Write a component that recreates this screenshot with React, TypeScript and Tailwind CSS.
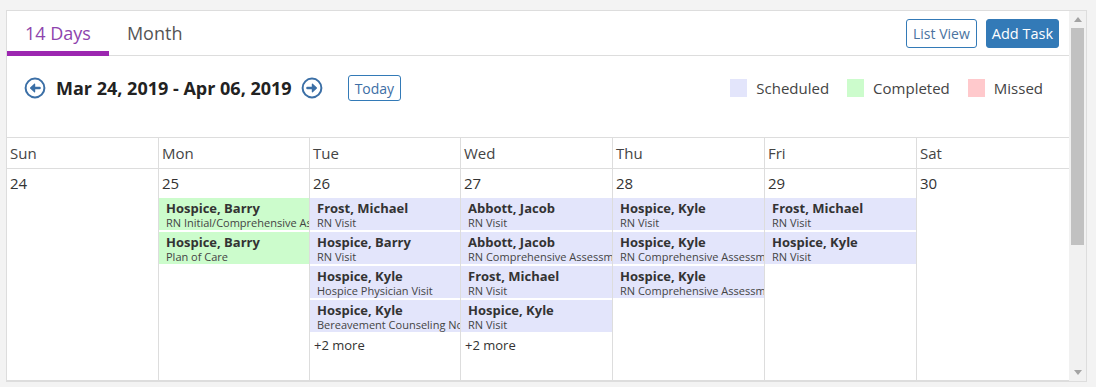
import React from "react";

type Kind = "scheduled" | "completed" | "missed";

type CalEvent = {
  name: string;
  task: string;
  kind: Kind;
};

type Day = {
  label: string;
  num: number;
  events: CalEvent[];
  more?: number;
};

const KIND_BG: Record<Kind, string> = {
  scheduled: "bg-[#e3e5fb]",
  completed: "bg-[#ccfccc]",
  missed: "bg-[#ffc9cc]",
};

const DAYS: Day[] = [
  { label: "Sun", num: 24, events: [] },
  {
    label: "Mon",
    num: 25,
    events: [
      { name: "Hospice, Barry", task: "RN Initial/Comprehensive Assessment", kind: "completed" },
      { name: "Hospice, Barry", task: "Plan of Care", kind: "completed" },
    ],
  },
  {
    label: "Tue",
    num: 26,
    events: [
      { name: "Frost, Michael", task: "RN Visit", kind: "scheduled" },
      { name: "Hospice, Barry", task: "RN Visit", kind: "scheduled" },
      { name: "Hospice, Kyle", task: "Hospice Physician Visit", kind: "scheduled" },
      { name: "Hospice, Kyle", task: "Bereavement Counseling Note", kind: "scheduled" },
    ],
    more: 2,
  },
  {
    label: "Wed",
    num: 27,
    events: [
      { name: "Abbott, Jacob", task: "RN Visit", kind: "scheduled" },
      { name: "Abbott, Jacob", task: "RN Comprehensive Assessment", kind: "scheduled" },
      { name: "Frost, Michael", task: "RN Visit", kind: "scheduled" },
      { name: "Hospice, Kyle", task: "RN Visit", kind: "scheduled" },
    ],
    more: 2,
  },
  {
    label: "Thu",
    num: 28,
    events: [
      { name: "Hospice, Kyle", task: "RN Visit", kind: "scheduled" },
      { name: "Hospice, Kyle", task: "RN Comprehensive Assessment", kind: "scheduled" },
      { name: "Hospice, Kyle", task: "RN Comprehensive Assessment", kind: "scheduled" },
    ],
  },
  {
    label: "Fri",
    num: 29,
    events: [
      { name: "Frost, Michael", task: "RN Visit", kind: "scheduled" },
      { name: "Hospice, Kyle", task: "RN Visit", kind: "scheduled" },
    ],
  },
  { label: "Sat", num: 30, events: [] },
];

// column widths read off the screenshot
const COLS = "grid-cols-[151px_151px_151px_152px_152px_152px_1fr]";

function CircleArrow({ dir }: { dir: "left" | "right" }) {
  return (
    <svg width="22" height="22" viewBox="0 0 22 22" className={dir === "right" ? "rotate-180" : ""}>
      <circle cx="11" cy="11" r="9.4" fill="none" stroke="#3b6fa6" strokeWidth="2" />
      <path d="M15.6 11H8" stroke="#3b6fa6" strokeWidth="2.4" strokeLinecap="round" />
      <path d="M10.6 7.2 6.6 11l4 3.8Z" fill="#3b6fa6" stroke="#3b6fa6" strokeWidth="1.2" strokeLinejoin="round" />
    </svg>
  );
}

function Legend({ color, label, first }: { color: string; label: string; first?: boolean }) {
  return (
    <div className={`flex items-center ${first ? "" : "ml-[18px]"}`}>
      <span className={`w-[17px] h-[18px] ${color}`} />
      <span className="ml-[9px] text-[15px] text-[#444]">{label}</span>
    </div>
  );
}

function Scrollbar() {
  return (
    <div className="w-[17px] shrink-0 bg-[#f1f1f1] flex flex-col">
      <div className="h-[17px] flex items-center justify-center">
        <svg width="8" height="5" viewBox="0 0 8 5">
          <path d="M0 5 4 0l4 5Z" fill="#a3a3a3" />
        </svg>
      </div>
      <div className="h-[217px] mx-[2px] bg-[#c1c1c1]" />
      <div className="flex-1" />
      <div className="h-[17px] flex items-center justify-center">
        <svg width="8" height="5" viewBox="0 0 8 5">
          <path d="M0 0h8L4 5Z" fill="#a3a3a3" />
        </svg>
      </div>
    </div>
  );
}

export default function App() {
  return (
    <div className="w-[1096px] h-[387px] bg-[#f3f3f3] pt-[10px] pl-[6px] font-['Open_Sans',sans-serif] overflow-hidden">
      <div className="w-[1081px] h-[372px] bg-white border border-[#dddddd] flex">
        <div className="w-[1062px] h-[370px] overflow-hidden">
          {/* tabs + actions */}
          <div className="h-[45px] border-b border-[#dddddd] flex">
            <div className="px-[18px] pt-[5px] -mb-px flex items-center border-b-[5px] border-[#9c27b0] text-[18px] text-[#8e44ad]">
              14 Days
            </div>
            <div className="px-[18px] pt-[5px] -mb-px flex items-center border-b-[5px] border-transparent text-[18px] text-[#555]">
              Month
            </div>
            <div className="ml-auto pt-[8px] pr-[10px] flex items-start gap-[9px]">
              <button className="h-[29px] px-[6px] border border-[#337ab7] rounded-[3px] bg-white text-[14px] text-[#4a73a0]">
                List View
              </button>
              <button className="h-[29px] px-[5px] border border-[#337ab7] rounded-[3px] bg-[#337ab7] text-[14.5px] text-white">
                Add Task
              </button>
            </div>
          </div>

          {/* date range + legend */}
          <div className="h-[81px] pt-[19px] pl-[17px] pr-[26px] flex items-start">
            <div className="h-[26px] flex items-center">
              <CircleArrow dir="left" />
              <span className="ml-[10px] mr-[9px] text-[18px] font-bold text-[#222]">Mar 24, 2019 - Apr 06, 2019</span>
              <CircleArrow dir="right" />
              <button className="ml-[25px] h-[26px] px-[6px] border border-[#337ab7] rounded-[3px] text-[14px] text-[#3d6ea5]">
                Today
              </button>
            </div>
            <div className="ml-auto h-[26px] flex items-center">
              <Legend first color="bg-[#e3e5fb]" label="Scheduled" />
              <Legend color="bg-[#ccfccc]" label="Completed" />
              <Legend color="bg-[#ffc9cc]" label="Missed" />
            </div>
          </div>

          {/* weekday header */}
          <div className={`grid ${COLS} h-[32px] border-y border-[#dddddd]`}>
            {DAYS.map((d, i) => (
              <div
                key={d.label}
                className={`flex items-center pl-[3px] text-[15px] text-[#444] ${i > 0 ? "border-l border-[#dddddd]" : ""}`}
              >
                {d.label}
              </div>
            ))}
          </div>

          {/* week row */}
          <div className={`grid ${COLS} h-[212px] border-b border-[#dddddd]`}>
            {DAYS.map((d, i) => (
              <div key={d.label} className={`min-w-0 ${i > 0 ? "border-l border-[#dddddd]" : ""}`}>
                <div className="pl-[3px] pt-[3px] leading-[22px] text-[15px] text-[#333]">{d.num}</div>
                <div className="mt-[4px] flex flex-col gap-[2px]">
                  {d.events.map((e, j) => (
                    <div
                      key={j}
                      className={`h-[32px] pl-[7px] pt-[2px] overflow-hidden whitespace-nowrap ${KIND_BG[e.kind]}`}
                    >
                      <div className="text-[13px] leading-[16px] font-bold text-[#333]">{e.name}</div>
                      <div className="text-[11px] leading-[13px] text-[#444]">{e.task}</div>
                    </div>
                  ))}
                </div>
                {d.more ? (
                  <div className="mt-[4px] pl-[4px] text-[13px] leading-[18px] text-[#333]">+{d.more} more</div>
                ) : null}
              </div>
            ))}
          </div>
        </div>
        <Scrollbar />
      </div>
    </div>
  );
}
